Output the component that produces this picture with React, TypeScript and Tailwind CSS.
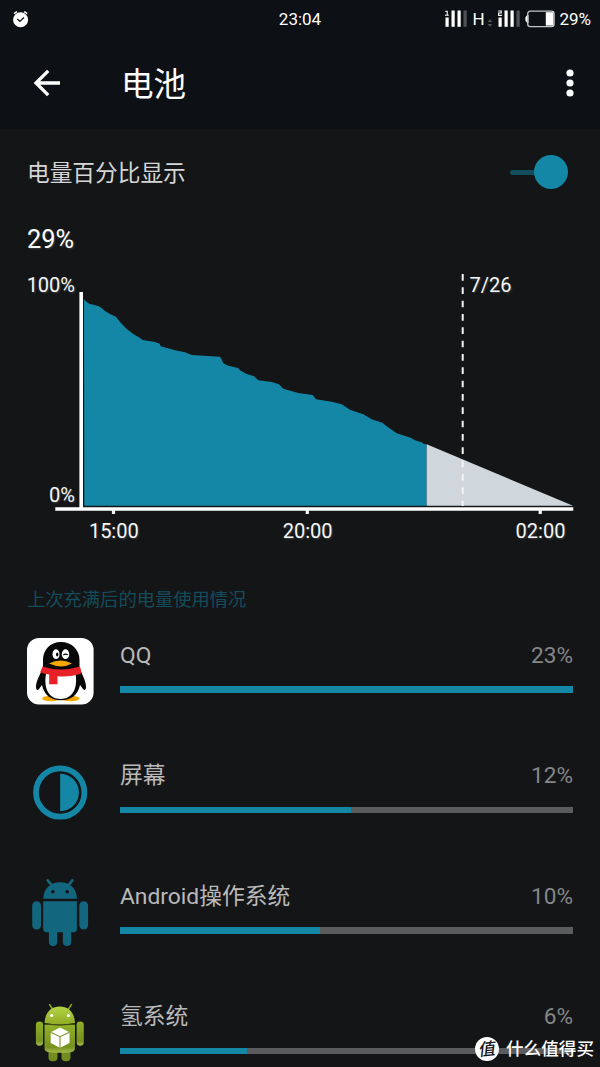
import type { ReactNode } from "react";

const FONT = "font-[Roboto,'Noto_Sans_CJK_SC',sans-serif]";

const LEVEL_POINTS =
  "84,299.3 86,301.5 89.3,303.7 98.3,306 101.7,308 105,311 110,314 116,316.7 120,322 126.7,329 133.3,334 140,338 142.7,340 155,342 159.7,343.7 160.7,346.3 175,350.3 185,352.3 191.7,355 220,356.7 221.3,358.7 223.3,363.3 228.3,365.7 238,368 240,370.3 246.7,374 254,376.3 258.3,380.3 271.7,382 279,384.3 283.3,388.7 298.3,393 312.7,395 316,399.3 331.7,401.7 341.7,404.3 350,409.7 363.3,414.3 371.7,419.3 382.3,422.7 386.7,426.3 396.7,433.3 410.7,437.7 415,440.3 421.7,442.3 424,444 426.7,444.3";

const TICKS = [
  { x: 113.5, label: "15:00" },
  { x: 307.3, label: "20:00" },
  { x: 540.2, label: "02:00" },
];

function AlarmIcon() {
  return (
    <svg width="18" height="18" viewBox="0 0 18 18" fill="none">
      <circle cx="9.6" cy="9.7" r="7.5" fill="#fff" />
      <path d="M3 3.6 6 1.6M16.2 3.6 13.2 1.6" stroke="#fff" strokeWidth="1.7" />
      <path d="m6.4 9 2.5 2.4 4-3.9" stroke="#0d1014" strokeWidth="1.3" />
    </svg>
  );
}

function Signal({ sim }: { sim: 1 | 2 }) {
  return (
    <svg width="23" height="18" viewBox="0 0 23 18" fill="#fff">
      <rect x="0.5" y="7.5" width="3.2" height="9.3" />
      <rect x="6.5" y="0.5" width="3.2" height="16.3" />
      <rect x="12.5" y="0.5" width="3.2" height="16.3" />
      <rect x="18.5" y="0.5" width="3.2" height="16.3" fill="#505356" />
      {sim === 1 ? (
        <path d="M.2 1.2h2v4M0 5.3h3.8" stroke="#fff" strokeWidth="1.1" fill="none" />
      ) : (
        <path d="M.2 1h3v2H.5v2.4h3.4" stroke="#fff" strokeWidth="1.1" fill="none" />
      )}
    </svg>
  );
}

function StatusBar() {
  return (
    <div className="grid h-[38px] grid-cols-3 items-center">
      <div className="pl-[11px]">
        <AlarmIcon />
      </div>
      <div className="text-center text-[17px] leading-none">23:04</div>
      <div className="flex items-center justify-end pr-[9px]">
        <Signal sim={1} />
        <span className="ml-[4px] w-[13px] text-[17px] leading-none">H</span>
        <svg className="mt-2 ml-[2px]" width="6" height="8" viewBox="0 0 6 8" fill="#55585b">
          <path d="M3 0 5.2 3H.8zM3 8 .8 5h4.4z" />
        </svg>
        <span className="ml-[5px] flex">
          <Signal sim={2} />
        </span>
        <svg className="ml-[4px]" width="31" height="18" viewBox="0 0 31 18">
          <path d="M3.5 4.8Q.3 5.5.3 9t3.2 4.2z" fill="#fff" />
          <rect x="2.7" y="1.2" width="26.4" height="15.4" rx="2.6" fill="none" stroke="#c4c6c8" strokeWidth="1.3" />
          <rect x="20.8" y="2.2" width="7.6" height="13.4" fill="#fff" />
        </svg>
        <span className="ml-[3px] text-[17px] leading-none">29%</span>
      </div>
    </div>
  );
}

function Header() {
  return (
    <div className="flex h-[91px] items-center pr-[26px] pl-[33px]">
      <svg className="-mt-px" width="28" height="28" viewBox="0 0 28 28" fill="none" stroke="#fff" strokeWidth="3.3">
        <path d="M27 14H3M15.2 1.8 3 14l12.2 12.2" />
      </svg>
      <h1 className="mt-1 ml-[60px] flex-1 text-[32.6px] leading-none">电池</h1>
      <svg className="-mt-px" width="8" height="30" viewBox="0 0 8 30" fill="#fff">
        <circle cx="4" cy="5" r="3.6" />
        <circle cx="4" cy="15" r="3.6" />
        <circle cx="4" cy="25" r="3.6" />
      </svg>
    </div>
  );
}

function BatteryChart() {
  return (
    <svg className="block [text-shadow:1px_1px_2px_#66666688]" width="600" height="275" viewBox="0 270 600 275" fontSize="20" fill="#f5f5f5">
      <polygon points={`${LEVEL_POINTS} 426.7,505.7 84.3,505.7`} fill="#1587a6" />
      <polygon points="426.7,444.3 573,505.7 426.7,505.7" fill="#cfd6dc" />
      <path d="M462.7 274V506" stroke="#f4f4f4" strokeWidth="2" strokeDasharray="6.7 6.63" />
      <path d="M81.2 292V509M55.3 509H573.3" stroke="#fff" strokeWidth="3.6" />
      <text x="75" y="292.4" textAnchor="end">100%</text>
      <text x="75" y="502.4" textAnchor="end">0%</text>
      <text x="469.5" y="292.4">7/26</text>
      {TICKS.map((t) => (
        <g key={t.label}>
          <rect x={t.x - 1.6} y="510" width="3.2" height="4" />
          <text x={t.x + 0.3} y="537.5" textAnchor="middle">
            {t.label}
          </text>
        </g>
      ))}
    </svg>
  );
}

function QQIcon() {
  return (
    <svg width="67" height="67" viewBox="0 0 67 67">
      <rect width="66.6" height="66.6" rx="12" fill="#fff" />
      <ellipse cx="24" cy="60.5" rx="9" ry="2.8" fill="#f5a800" />
      <ellipse cx="43.5" cy="60.5" rx="9" ry="2.8" fill="#f5a800" />
      <path d="M34 4C23 4 16 12 16 22v7c-1 5-6.5 12-7 19-.1 4 1.3 5 3 3l3-4C17 57 24 62.3 34 62.3S51 57 53 47l3 4c1.700 2 3.100 1 3-3-.5-7-5.500-14-6.500-19v-7C52.500 12 45 4 34 4z" fill="#080808" />
      <path d="M19 36h29.500c2.500 14-3 25-15 25S16.500 50 19 36z" fill="#fff" />
      <ellipse cx="29" cy="16.2" rx="3.5" ry="4.9" fill="#fff" />
      <ellipse cx="38.5" cy="16.2" rx="3.7" ry="4.9" fill="#fff" />
      <ellipse cx="30.2" cy="16.6" rx="1.2" ry="2" fill="#080808" />
      <path d="M36.200 17q2.200-1.600 4.600-.2" stroke="#080808" strokeWidth="1.3" fill="none" />
      <path d="M22 25.500q11.500-6 23 0-10.500 5.800-23 0z" fill="#f5a800" />
      <path d="M15.500 28.500q18 6 37.500 0l1.500 6.700q-11 4-24 3v8h-8.300v-9.600q-5-.7-9-2.300z" fill="#e71f26" />
    </svg>
  );
}

function ScreenIcon() {
  return (
    <svg width="67" height="67" viewBox="0 0 67 67">
      <circle cx="33.2" cy="33.5" r="24.2" fill="none" stroke="#1587a6" strokeWidth="5.7" />
      <path d="M33.200 14.800a18.700 18.700 0 0 1 0 37.400z" fill="#1587a6" />
    </svg>
  );
}

function AndroidIcon() {
  return (
    <svg width="67" height="67" viewBox="0 0 67 67" fill="#12677e">
      <path d="m20.700 1.300 5 6M45.400 1.300l-5 6" stroke="#12677e" strokeWidth="2.6" strokeLinecap="round" />
      <path d="M16.200 19.700C16.700 9 23.700 3.200 33.200 3.200S49.700 9 49.900 19.700z" />
      <circle cx="25.9" cy="12.7" r="1.8" fill="#141517" />
      <circle cx="40.2" cy="12.7" r="1.8" fill="#141517" />
      <path d="M16.200 22.300h33.700v27.500a3.500 3.500 0 0 1-3.500 3.500H19.700a3.500 3.500 0 0 1-3.500-3.500z" />
      <rect x="5.2" y="22.2" width="8.8" height="28.3" rx="4.4" />
      <rect x="52.3" y="22.2" width="8.8" height="28.3" rx="4.4" />
      <rect x="21.9" y="46" width="8.3" height="21" rx="4.1" />
      <rect x="35.9" y="46" width="8.3" height="21" rx="4.1" />
    </svg>
  );
}

function HydrogenIcon() {
  return (
    <svg width="67" height="67" viewBox="0 0 67 67">
      <defs>
        <linearGradient id="robotHead" x1="0" y1="0" x2="0" y2="1">
          <stop offset="0" stopColor="#b5d346" />
          <stop offset="1" stopColor="#8fad25" />
        </linearGradient>
        <linearGradient id="robotBody" x1="0" y1="0" x2="0" y2="1">
          <stop offset="0" stopColor="#91b128" />
          <stop offset=".8" stopColor="#76911f" />
          <stop offset="1" stopColor="#a4bf4b" />
        </linearGradient>
      </defs>
      <path d="m22.500 4.500 4 6M44.500 4.500l-4 6" stroke="#87a325" strokeWidth="1.5" strokeLinecap="round" />
      <rect x="21.5" y="45" width="9" height="16.2" rx="4" fill="#718d20" />
      <rect x="34.5" y="45" width="9" height="16.2" rx="4" fill="#718d20" />
      <rect x="8.9" y="21.5" width="7.2" height="24.2" rx="3.4" fill="url(#robotBody)" />
      <rect x="49.6" y="21.5" width="7.2" height="24.2" rx="3.4" fill="url(#robotBody)" />
      <path d="M17.500 24.500h30.500v23.500q0 4-4.500 4.200-10.500 1.300-21.500 0-4.500-.2-4.500-4.200z" fill="url(#robotBody)" />
      <path d="M17.500 23C18 12 24.500 6.500 32.800 6.500S47.500 12 48 23q-15 2.500-30.500 0z" fill="url(#robotHead)" />
      <path d="M17.500 24q15 2.300 30.500 0" stroke="#39480f" strokeWidth="1" fill="none" />
      <circle cx="24.7" cy="15.5" r="1.6" fill="#fff" />
      <circle cx="41.5" cy="15.500" r="1.6" fill="#fff" />
      <path d="m33 27.500 9.500 4.700v10.800L33 47.700 23.700 43V32.200z" fill="#fff" />
      <path d="m23.700 32.200 9.300 4.500 9.500-4.500M33 36.700v11" stroke="#809a2c" strokeWidth="1.2" fill="none" />
    </svg>
  );
}

const USAGE: { name: string; percent: string; fill: number; icon: ReactNode }[] = [
  { name: "QQ", percent: "23%", fill: 100, icon: <QQIcon /> },
  { name: "屏幕", percent: "12%", fill: 51.1, icon: <ScreenIcon /> },
  { name: "Android操作系统", percent: "10%", fill: 44.1, icon: <AndroidIcon /> },
  { name: "氢系统", percent: "6%", fill: 28, icon: <HydrogenIcon /> },
];

export default function App() {
  return (
    <div className={`relative h-[1067px] w-[600px] overflow-hidden bg-[#141517] text-white ${FONT}`}>
      <header className="h-[129px] bg-[#0d1014]">
        <StatusBar />
        <Header />
      </header>

      <div className="flex h-[86px] items-center justify-between pr-8 pl-[27px]">
        <span className="pt-1 text-[22.7px] leading-none text-[#d6d6d6]">电量百分比显示</span>
        <div className="flex items-center">
          <span className="-mr-1 h-[5px] w-7 rounded-full bg-[#124e5e]" />
          <span className="size-[34px] rounded-full bg-[#1587a6]" />
        </div>
      </div>

      <div className="flex h-[55px] items-center pb-[6px] pl-[27px] text-[25.3px] leading-none [text-shadow:1px_1px_2px_#66666688]">
        29%
      </div>

      <BatteryChart />

      <div className="flex h-[93px] items-center pt-[18px] pl-[27px] text-[18.3px] leading-none text-[#154c5c]">
        上次充满后的电量使用情况
      </div>

      <ul>
        {USAGE.map((item) => (
          <li key={item.name} className="flex h-[120.5px] pr-[27px] pl-[27px]">
            <div className="w-[93px] shrink-0">{item.icon}</div>
            <div className="flex-1">
              <div className="flex h-[48px] items-center justify-between pb-[12px] leading-none">
                <span className="text-[22.8px] text-[#b9b9ba]">{item.name}</span>
                <span className="text-[22.6px] text-[#858687]">{item.percent}</span>
              </div>
              <div className="h-[6.7px] bg-[#5b5c5e]">
                <div className="h-full bg-[#1587a6]" style={{ width: `${item.fill}%` }} />
              </div>
            </div>
          </li>
        ))}
      </ul>

      {/* site mark laid over the last row */}
      <div className="absolute top-[1037px] left-[475px] flex h-6 items-center">
        <span className="flex size-6 items-center justify-center rounded-full bg-white text-[17px] leading-none font-medium text-[#141517]">
          <span className="-skew-x-12 -rotate-6">值</span>
        </span>
        <span className="mt-[2px] ml-[7px] text-[17.6px] leading-none font-medium whitespace-nowrap">什么值得买</span>
      </div>
    </div>
  );
}
